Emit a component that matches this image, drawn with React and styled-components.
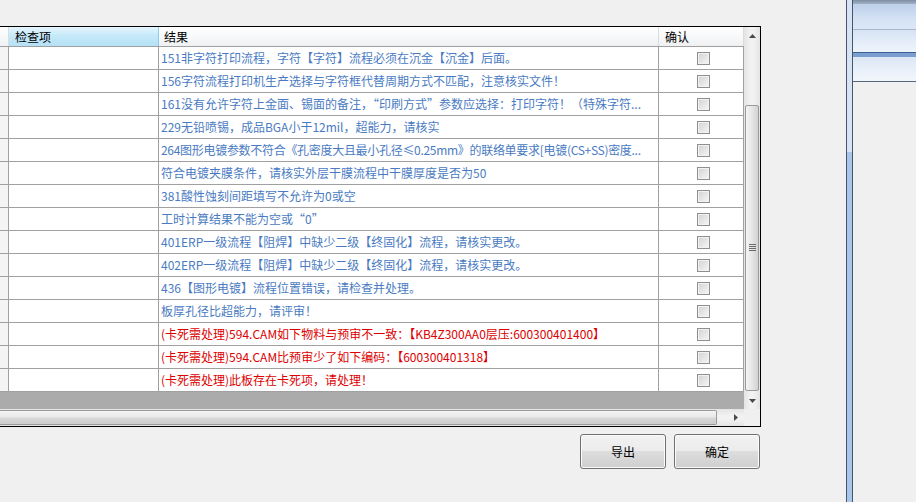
import React from "react";
import styled, { createGlobalStyle } from "styled-components";

const GlobalStyle = createGlobalStyle`
  html, body { margin: 0; padding: 0; background: #f0f0f0; }
  body {
    font-family: "Noto Sans CJK SC", "DejaVu Sans", sans-serif;
    font-size: 12px;
  }
`;

const COLS = "9px 150px 500px 85px";

const Window = styled.div`
  display: flex;
  width: 916px;
  height: 502px;
  overflow: hidden;
  background: #f0f0f0;
`;

const Main = styled.div`
  width: 846px;
  flex-shrink: 0;
  padding-top: 26px;
  display: flex;
  flex-direction: column;
`;

const GridBox = styled.div`
  width: 760px;
  border: 1px solid #000;
  border-left: none;
  display: grid;
  grid-template-columns: 744px 16px;
  grid-template-rows: 382px 17px;
  background: #f0f0f0;
`;

const Viewport = styled.div`
  background: #ababab;
  overflow: hidden;
`;

const HeaderRow = styled.div`
  display: grid;
  grid-template-columns: ${COLS};
  height: 20px;
  box-sizing: border-box;
  border-bottom: 1px solid #a0a0a0;
`;

const HeaderCell = styled.div`
  box-sizing: border-box;
  padding-left: ${(p) => p.$pad || 6}px;
  line-height: 19px;
  color: #000;
  white-space: nowrap;
  border-right: 1px solid ${(p) => (p.$active ? "#8ccbe9" : "#dcdcdc")};
  background: ${(p) =>
    p.$active
      ? "linear-gradient(#e6f6fd, #c6e9f9 45%, #b5e1f6)"
      : "linear-gradient(#ffffff, #f8f9fa 50%, #eff0f2)"};
`;

const Row = styled.div`
  display: grid;
  grid-template-columns: ${COLS};
  height: 23px;
  box-sizing: border-box;
  border-bottom: 1px solid #a0a0a0;
  background: #fff;
`;

const RowHead = styled.div`
  background: #f4f4f4;
  border-right: 1px solid #a0a0a0;
`;

const Cell = styled.div`
  box-sizing: border-box;
  border-right: 1px solid #a0a0a0;
  padding-left: 2px;
  line-height: 22px;
  white-space: nowrap;
  overflow: hidden;
  letter-spacing: ${(p) => (p.$tight ? "-0.3px" : "normal")};
  color: ${(p) => (p.$danger ? "#dd0000" : "#4a7bc2")};
`;

const CheckCell = styled.div`
  box-sizing: border-box;
  border-right: 1px solid #a0a0a0;
  display: flex;
  align-items: center;
  padding-left: 38px;
`;

const CheckBox = styled.span`
  width: 13px;
  height: 13px;
  box-sizing: border-box;
  border: 1px solid #8e8f8f;
  background: linear-gradient(135deg, #d2d2d2, #f6f6f6);
  box-shadow: inset 0 0 0 1px #f2f2f2;
`;

const VScroll = styled.div`
  display: flex;
  flex-direction: column;
  background: linear-gradient(to right, #e4e4e4, #f2f2f2 40%, #f2f2f2 60%, #e4e4e4);
`;

const ArrowBtn = styled.div`
  width: ${(p) => p.$w || 16}px;
  height: 17px;
  flex-shrink: 0;
  display: flex;
  align-items: center;
  justify-content: center;
`;

const VTrack = styled.div`
  flex: 1;
  padding-top: 61px;
  padding-bottom: 1px;
  display: flex;
  flex-direction: column;
`;

const VThumb = styled.div`
  flex: 1;
  margin: 0 1px;
  border: 1px solid #9a9a9a;
  border-radius: 2px;
  background: linear-gradient(to right, #f4f4f4, #e6e6e6 50%, #d2d2d2);
  display: flex;
  align-items: center;
  justify-content: center;
`;

const HScroll = styled.div`
  display: flex;
  align-items: center;
  background: linear-gradient(#e4e4e4, #f2f2f2 40%, #f2f2f2 60%, #e4e4e4);
`;

const HThumb = styled.div`
  width: 717px;
  height: 15px;
  box-sizing: border-box;
  border: 1px solid #9a9a9a;
  border-left: none;
  border-radius: 0 2px 2px 0;
  background: linear-gradient(#f4f4f4, #e9e9e9 45%, #d8d8d8 55%, #cdcdcd);
  margin-right: auto;
`;

const Corner = styled.div`
  background: #f0f0f0;
`;

const ButtonRow = styled.div`
  width: 760px;
  display: flex;
  justify-content: flex-end;
  gap: 8px;
  margin-top: 7px;
`;

const Button = styled.button`
  width: 86px;
  height: 35px;
  border: 1px solid #707070;
  border-radius: 3px;
  background: linear-gradient(#f2f2f2, #ebebeb 50%, #dddddd 50%, #cfcfcf);
  box-shadow: inset 0 0 0 1px #fbfbfb;
  font-family: "Noto Sans CJK SC", sans-serif;
  font-size: 12px;
  color: #000;
  padding: 0;
`;

const Splitter = styled.div`
  width: 5px;
  flex-shrink: 0;
  border-left: 1px solid #46556a;
  border-right: 1px solid #46556a;
  background: linear-gradient(#d7e4f4 0, #d7e4f4 152px, #a9c6eb 152px);
`;

const SidePanel = styled.div`
  flex: 1;
  display: flex;
  flex-direction: column;
`;

const Band = styled.div`
  height: ${(p) => p.$h}px;
  flex-shrink: 0;
  box-sizing: border-box;
  background: ${(p) => p.$bg};
  border-top: ${(p) => p.$top || "none"};
  border-bottom: ${(p) => p.$bottom || "none"};
`;

const Tri = ({ dir }) => {
  const pts = {
    up: "0,4 7,4 3.5,0",
    down: "0,0 7,0 3.5,4",
    right: "0,0 0,7 4,3.5",
  }[dir];
  const w = dir === "right" ? 4 : 7;
  const h = dir === "right" ? 7 : 4;
  return (
    <svg width={w} height={h} viewBox={`0 0 ${w} ${h}`}>
      <polygon points={pts} fill="#4a4a4a" />
    </svg>
  );
};

const Grip = () => (
  <svg width="7" height="8" viewBox="0 0 7 8">
    {[0, 2, 4, 6].map((y) => (
      <rect key={y} x="0" y={y} width="7" height="1" fill="#6b6b6b" />
    ))}
  </svg>
);

const rows = [
  { text: "151非字符打印流程，字符【字符】流程必须在沉金【沉金】后面。" },
  { text: "156字符流程打印机生产选择与字符框代替周期方式不匹配，注意核实文件！" },
  { text: "161没有允许字符上金面、锡面的备注，“印刷方式”参数应选择：打印字符！（特殊字符..." },
  { text: "229无铅喷锡，成品BGA小于12mil，超能力，请核实" },
  { text: "264图形电镀参数不符合《孔密度大且最小孔径≤0.25mm》的联络单要求[电镀(CS+SS)密度...", tight: true },
  { text: "符合电镀夹膜条件，请核实外层干膜流程中干膜厚度是否为50" },
  { text: "381酸性蚀刻间距填写不允许为0或空" },
  { text: "工时计算结果不能为空或“0”" },
  { text: "401ERP一级流程【阻焊】中缺少二级【终固化】流程，请核实更改。" },
  { text: "402ERP一级流程【阻焊】中缺少二级【终固化】流程，请核实更改。" },
  { text: "436【图形电镀】流程位置错误，请检查并处理。" },
  { text: "板厚孔径比超能力，请评审！" },
  { text: "(卡死需处理)594.CAM如下物料与预审不一致：【KB4Z300AA0层压:600300401400】", danger: true },
  { text: "(卡死需处理)594.CAM比预审少了如下编码：【600300401318】", danger: true },
  { text: "(卡死需处理)此板存在卡死项，请处理！", danger: true },
];

export default function App() {
  return (
    <Window>
      <GlobalStyle />
      <Main>
        <GridBox>
          <Viewport>
            <HeaderRow>
              <HeaderCell $pad={0} />
              <HeaderCell $active>检查项</HeaderCell>
              <HeaderCell $pad={5}>结果</HeaderCell>
              <HeaderCell>确认</HeaderCell>
            </HeaderRow>
            {rows.map((r, i) => (
              <Row key={i}>
                <RowHead />
                <Cell />
                <Cell $danger={r.danger} $tight={r.tight}>
                  {r.text}
                </Cell>
                <CheckCell>
                  <CheckBox />
                </CheckCell>
              </Row>
            ))}
          </Viewport>
          <VScroll>
            <ArrowBtn>
              <Tri dir="up" />
            </ArrowBtn>
            <VTrack>
              <VThumb>
                <Grip />
              </VThumb>
            </VTrack>
            <ArrowBtn>
              <Tri dir="down" />
            </ArrowBtn>
          </VScroll>
          <HScroll>
            <HThumb />
            <ArrowBtn $w={17}>
              <Tri dir="right" />
            </ArrowBtn>
          </HScroll>
          <Corner />
        </GridBox>
        <ButtonRow>
          <Button>导出</Button>
          <Button>确定</Button>
        </ButtonRow>
      </Main>
      <Splitter />
      <SidePanel>
        <Band $h={4} $bg="linear-gradient(#7e8ea3, #a3b3c6)" />
        <Band
          $h={26}
          $bg="linear-gradient(#bcd0ea, #d4e2f4 60%, #dce8f6)"
          $bottom="1px solid #aab7c7"
        />
        <Band $h={22} $bg="linear-gradient(#d6e3f4, #e6eef9 60%, #eef4fb)" />
        <Band $h={5} $bg="#7a9dd2" $top="1px solid #3c5f96" />
        <Band
          $h={25}
          $bg="linear-gradient(#dce7f5, #eaf1fa 60%, #f2f6fc)"
          $bottom="1px solid #56677d"
        />
      </SidePanel>
    </Window>
  );
}
